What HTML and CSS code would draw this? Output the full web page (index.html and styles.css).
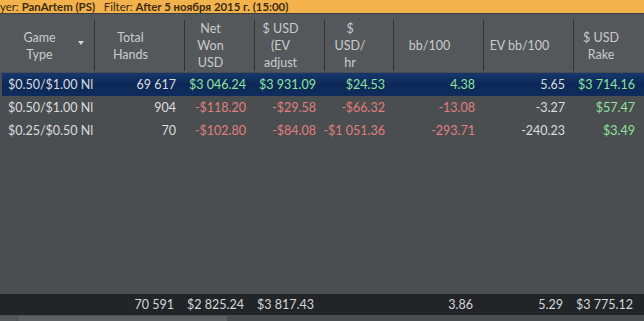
FILE: index.html
```html
<!DOCTYPE html>
<html>
<head>
<meta charset="utf-8">
<link rel="stylesheet" href="styles.css">
</head>
<body>
<div class="app">
  <div class="filterbar">yer: <b>PanArtem (PS)</b>&nbsp;&nbsp; Filter: <b>After 5 ноября 2015 г. (15:00)</b></div>
  <div class="grid header">
    <div class="hcell game">Game<br>Type<span class="sort"></span></div>
    <div class="hcell">Total<br>Hands</div>
    <div class="hcell">Net<br>Won<br>USD</div>
    <div class="hcell">$ USD<br>(EV<br>adjust</div>
    <div class="hcell">$<br>USD/<br>hr</div>
    <div class="hcell">bb/100</div>
    <div class="hcell">EV bb/100</div>
    <div class="hcell last">$ USD<br>Rake</div>
  </div>
  <div class="body">
    <div class="grid row selected">
      <div class="cell left">$0.50/$1.00 Nl</div>
      <div class="cell">69 617</div>
      <div class="cell pos">$3 046.24</div>
      <div class="cell pos">$3 931.09</div>
      <div class="cell pos">$24.53</div>
      <div class="cell pos">4.38</div>
      <div class="cell">5.65</div>
      <div class="cell pos">$3 714.16</div>
    </div>
    <div class="grid row">
      <div class="cell left">$0.50/$1.00 Nl</div>
      <div class="cell">904</div>
      <div class="cell neg">-$118.20</div>
      <div class="cell neg">-$29.58</div>
      <div class="cell neg">-$66.32</div>
      <div class="cell neg">-13.08</div>
      <div class="cell">-3.27</div>
      <div class="cell pos">$57.47</div>
    </div>
    <div class="grid row">
      <div class="cell left">$0.25/$0.50 Nl</div>
      <div class="cell">70</div>
      <div class="cell neg">-$102.80</div>
      <div class="cell neg">-$84.08</div>
      <div class="cell neg">-$1 051.36</div>
      <div class="cell neg">-293.71</div>
      <div class="cell">-240.23</div>
      <div class="cell pos">$3.49</div>
    </div>
  </div>
  <div class="grid footer">
    <div class="cell left"></div>
    <div class="cell">70 591</div>
    <div class="cell">$2 825.24</div>
    <div class="cell">$3 817.43</div>
    <div class="cell"></div>
    <div class="cell">3.86</div>
    <div class="cell">5.29</div>
    <div class="cell">$3 775.12</div>
  </div>
  <div class="scrollbar">
    <div class="sbtn"></div>
    <div class="thumb"></div>
  </div>
</div>
</body>
</html>
```

FILE: styles.css
```css
html, body {
  margin: 0;
  padding: 0;
  background: #4b4e51;
}
body {
  font-family: Lato, "Noto Sans", sans-serif;
  font-size: 12.5px;
  color: #dcdddd;
}
.app {
  width: 644px;
  height: 321px;
  display: flex;
  flex-direction: column;
  overflow: hidden;
  background: #4b4e51;
}
.filterbar {
  height: 13px;
  line-height: 14px;
  background: #f3b24c;
  color: #3b2a0c;
  font-size: 11.4px;
  white-space: nowrap;
  overflow: hidden;
  border-bottom: 1px solid #3c3f42;
}
.filterbar b {
  font-weight: 700;
}
.grid {
  display: grid;
  grid-template-columns: 95px 90px 70px 70px 69px 90px 90px 70px;
}
.header {
  background: #55585b;
  height: 58px;
  padding: 6px 0 3px;
  box-sizing: border-box;
}
.hcell {
  display: flex;
  align-items: center;
  justify-content: center;
  text-align: center;
  line-height: 17px;
  color: #c9cbcc;
  border-right: 1px solid #303335;
  padding-right: 18px;
  position: relative;
}
.hcell.last {
  border-right: none;
  padding-right: 16px;
}
.hcell.game {
  padding-right: 15px;
}
.sort {
  position: absolute;
  right: 10px;
  top: 21px;
  width: 0;
  height: 0;
  border-left: 3.5px solid transparent;
  border-right: 3.5px solid transparent;
  border-top: 4px solid #d6d8d9;
}
.body {
  flex: 1;
  padding: 1px 0 0 2px;
}
.row {
  height: 23px;
  grid-template-columns: 93px 90px 70px 70px 69px 90px 90px 70px;
}
.cell {
  display: flex;
  align-items: center;
  justify-content: flex-end;
  padding-right: 9px;
  white-space: nowrap;
}
.cell.left {
  justify-content: flex-start;
  padding-left: 6px;
}
.selected {
  background: linear-gradient(#17386d, #0c2857 50%, #0f2c5c);
}
.pos { color: #8ee49a; }
.neg { color: #e07e7a; }
.footer {
  height: 21px;
  background: #222528;
  color: #d6d7d8;
}
.footer .cell {
  padding-right: 11px;
}
.scrollbar {
  height: 5px;
  display: flex;
  background: #4b4e51;
  padding-top: 1px;
}
.sbtn {
  width: 17px;
  background: #55585b;
}
.thumb {
  width: 209px;
  margin-left: 1px;
  background: #5e6164;
}
```
